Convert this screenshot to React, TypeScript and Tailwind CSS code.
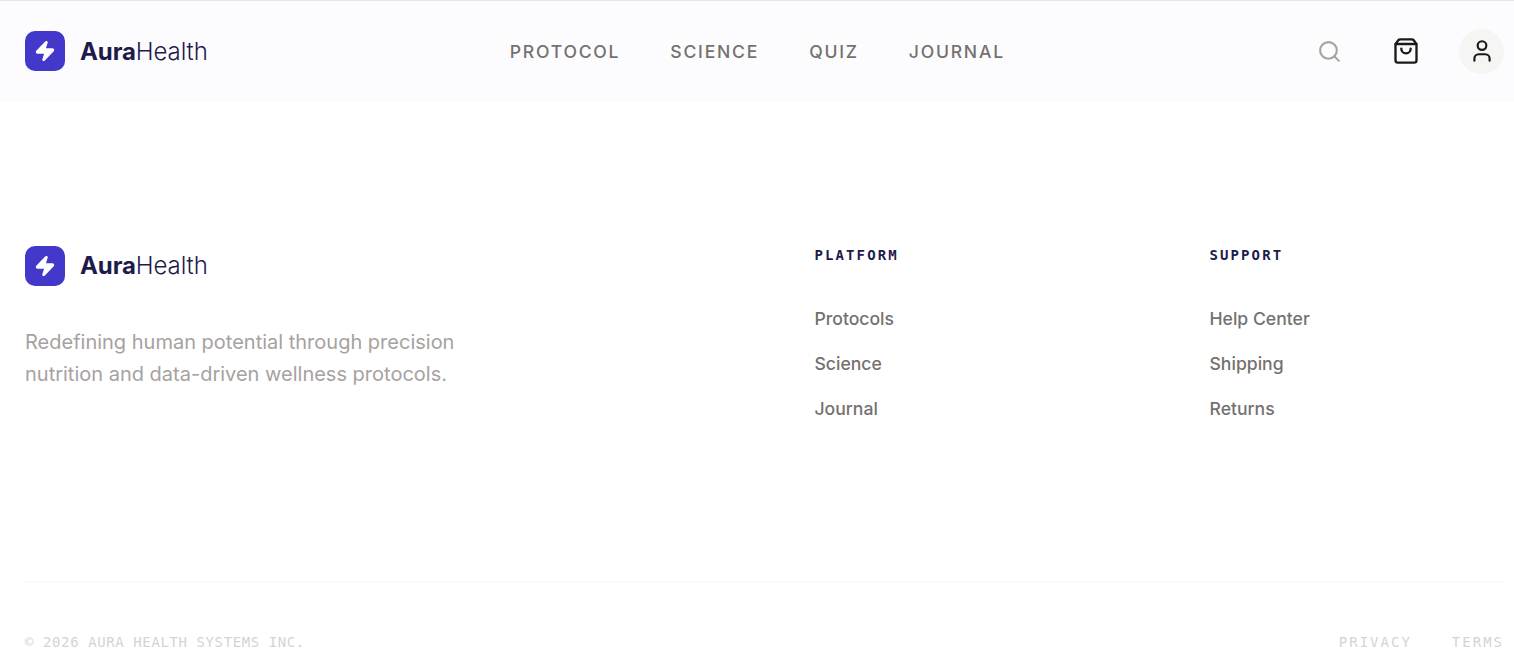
import { Search, ShoppingBag, User, Zap } from 'lucide-react'

function Logo({ inHeader = false }: { inHeader?: boolean }) {
  return (
    <div className="flex items-center gap-[15px]">
      <div className="flex h-10 w-10 items-center justify-center rounded-[10px] bg-[#4338ca]">
        <Zap className="h-[22px] w-[22px] fill-white text-white" />
      </div>
      <span className={inHeader ? 'mt-[2px] text-2xl tracking-[-0.1px] text-[#1e1b4b]' : 'text-2xl tracking-[-0.1px] text-[#1e1b4b]'}>
        <span className="font-bold">Aura</span>
        <span className="font-light">Health</span>
      </span>
    </div>
  )
}

function FooterColumn({ title, links }: { title: string; links: string[] }) {
  return (
    <div>
      <h4 className="-mt-px font-['DejaVu_Sans_Mono',monospace] text-sm font-bold tracking-[2.1px] text-[#1e1b4b]">{title}</h4>
      <ul className="mt-[42px] flex flex-col gap-[21px]">
        {links.map((link) => (
          <li key={link} className="text-[17.6px]/6 font-medium text-[#75716e]">{link}</li>
        ))}
      </ul>
    </div>
  )
}

export default function App() {
  return (
    <div className="h-[663px] overflow-hidden bg-white font-['Inter',sans-serif]">
      <header className="flex h-[102px] items-center justify-between border-t border-[#e5e5e5] bg-[#fcfcfe] pr-[10px] pb-px pl-[25px]">
        <Logo inHeader />
        <nav className="mt-[3px] mr-[10px] flex gap-[50px] text-[17.6px] font-medium tracking-[1.76px] text-[#75716e]">
          <span>PROTOCOL</span>
          <span>SCIENCE</span>
          <span>QUIZ</span>
          <span>JOURNAL</span>
        </nav>
        <div className="flex items-center gap-[50px]">
          <Search className="h-[25px] w-[25px] text-[#a8a29e]" />
          <div className="flex items-center gap-[39px]">
            <ShoppingBag className="h-7 w-7 text-[#1c1917]" />
            <div className="flex h-[45px] w-[45px] items-center justify-center rounded-full bg-[#f5f5f4]">
              <User className="h-[26px] w-[26px] text-[#1c1917]" />
            </div>
          </div>
        </div>
      </header>
      <footer className="pr-[10px] pl-[25px] pt-[144px]">
        <div className="grid h-[336px] grid-cols-[789.5px_395px_1fr] border-b border-[#f8f8f7]">
          <div>
            <Logo />
            <p className="mt-[40px] text-xl/8 text-[#a6a29f]">
              Redefining human potential through precision
              <br />
              nutrition and data-driven wellness protocols.
            </p>
          </div>
          <FooterColumn title="PLATFORM" links={['Protocols', 'Science', 'Journal']} />
          <FooterColumn title="SUPPORT" links={['Help Center', 'Shipping', 'Returns']} />
        </div>
        <div className="flex justify-between pt-[50px] font-['DejaVu_Sans_Mono',monospace] text-sm text-[#d6d3d1]">
          <span className="tracking-[0.6px]">© 2026 AURA HEALTH SYSTEMS INC.</span>
          <div className="flex gap-10 tracking-[2px]">
            <span>PRIVACY</span>
            <span>TERMS</span>
          </div>
        </div>
      </footer>
    </div>
  )
}
